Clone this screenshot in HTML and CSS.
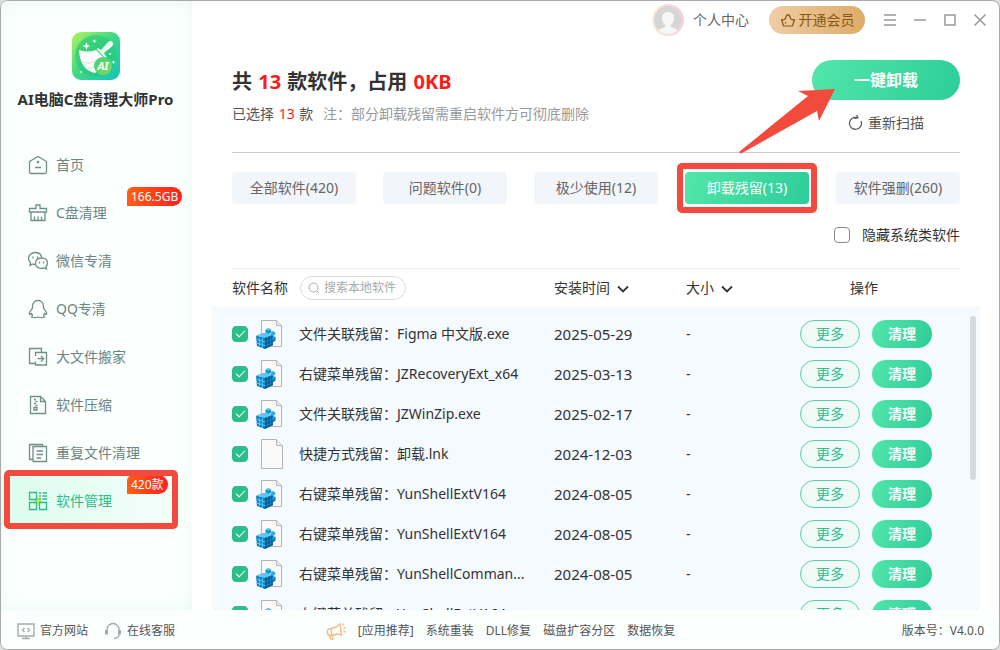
FILE: index.html
```html
<!DOCTYPE html>
<html lang="zh-CN">
<head>
  <meta charset="UTF-8" />
  <meta name="viewport" content="width=device-width, initial-scale=1.0" />
  <title>AI电脑C盘清理大师Pro</title>
  <link rel="stylesheet" href="styles.css">
</head>
<body>
  <!-- 公用图标 -->
  <svg class="sprite" aria-hidden="true">
    <symbol id="icon-page" viewBox="0 0 28 32">
      <path d="M5.500 1.500h15l6 6v23h-21z" fill="#f9f9f9" stroke="#b4b4b4"/>
      <path d="M20.500 1.500v6h6" fill="#ececec" stroke="#b4b4b4"/>
    </symbol>
    <symbol id="icon-reg" viewBox="0 0 28 32">
      <path d="M5.500 2.500h15l5 5v21h-20z" fill="#f9f9f9" stroke="#b4b4b4"/>
      <path d="M20.500 2.500v5h5" fill="#ececec" stroke="#b4b4b4"/>
      <path d="M0 18l8-3 9 2v10l-8 4-8-3z" fill="#0b7fc4"/>
      <path d="M0 18l8-3 9 2-8 3z" fill="#5cc9f5"/>
      <path d="M9 20l8-3v10l-8 4z" fill="#07558c"/>
      <path d="M3.500 20v8M6.500 20v9.500M1 21.500l8 2.500M1 25l8 2.500" stroke="#54c5f2" stroke-width="1.100"/>
      <path d="M11.700 19v11M14.500 18v10M9 24l8-3M9 28l8-3.500" stroke="#1c8fd0" stroke-width=".7"/>
      <path d="M9.500 11.500l3-1.500 2.500 1.500v3L12.300 16 9.500 14.500z" fill="#1090d4"/>
      <path d="M9.500 11.500l3-1.500 2.500 1.500-2.700 1.300z" fill="#62ccf6"/>
      <path d="M14.500 20l2.500-1.500 2.500 1.500v2.500L17.200 24l-2.700-1.500z" fill="#0a70b0"/>
      <circle cx="17" cy="15.500" r="2.200" fill="#2aa8e4"/>
      <circle cx="18" cy="20" r="1.800" fill="#1d9cdc"/>
    </symbol>
  </svg>

  <div class="window">
    <div class="content">
      <aside class="sidebar">
        <svg class="logo" viewBox="0 0 48 48">
          <defs>
            <linearGradient id="logoBg" x1="0" y1="0" x2="1" y2="1">
              <stop offset="0" stop-color="#b2f55c"/>
              <stop offset=".45" stop-color="#43d982"/>
              <stop offset="1" stop-color="#12c3bd"/>
            </linearGradient>
            <linearGradient id="logoBall" x1="0" y1="0" x2="1" y2="1">
              <stop offset="0" stop-color="#3fcf77"/>
              <stop offset="1" stop-color="#7fdc63"/>
            </linearGradient>
          </defs>
          <rect width="48" height="48" rx="9" fill="url(#logoBg)"/>
          <circle cx="24" cy="24" r="21" fill="#27c77b" opacity=".65"/>
          <path d="M29 18l7-8q3-2 4.500 0 1.500 2 0 4L32 21l2.500 4-1.500 1-8.500-9 1.500-1z" fill="#e8fff2"/>
          <path d="M7 18q9 3 17 0l9 9q-4 10-10 14Q8 38 7 18z" fill="#fff"/>
          <path d="M10 30q8 3 14-2M14 36q8 1 13-5" fill="none" stroke="#bdeed2" stroke-width="1"/>
          <path d="M14.500 10l1 3 3 1-3 1-1 3-1-3-3-1 3-1zM22.500 7l.6 1.500 1.500.6-1.500.6-.6 1.500-.6-1.500-1.500-.6 1.500-.6zM41.500 28l.6 1.500 1.500.6-1.500.6-.6 1.500-.6-1.500-1.500-.6 1.500-.6z" fill="#fff"/>
          <circle cx="9" cy="40" r="1" fill="#d9ffe8"/>
          <circle cx="38" cy="22" r="1" fill="#d9ffe8"/>
          <circle cx="31" cy="34" r="9" fill="url(#logoBall)"/>
          <text class="logo-text" x="31" y="38" text-anchor="middle">AI</text>
        </svg>
        <h1 class="app-name">AI电脑C盘清理大师Pro</h1>

        <nav class="nav">
          <a class="nav-item" href="#">
            <svg class="nav-icon" viewBox="0 0 20 20"><path d="M1.500 6.500L10 1.500l8.500 5V17q0 1.500-1.500 1.500H3q-1.500 0-1.500-1.500zM7 12.500h6"/><circle cx="10" cy="7" r=".6"/></svg>
            首页
          </a>
          <a class="nav-item" href="#">
            <svg class="nav-icon" viewBox="0 0 20 20"><path d="M1.500 9V5.500H8V2h4v3.500h6.500V9zM3 9v8.500h14V9M6.500 17v-3.500M10 17v-3.500M13.500 17v-3.500"/></svg>
            C盘清理
            <span class="badge">166.5GB</span>
          </a>
          <a class="nav-item" href="#">
            <svg class="nav-icon" viewBox="0 0 20 20"><path d="M7.500 13.500q-2 0-3-.5L2 14.500l.5-3Q.5 9.500.5 7.500c0-3.500 3-6 6.700-6 3.500 0 6 2 6.500 5"/><path d="M13.500 7c3.500 0 6 2 6 5 0 1.500-.6 2.500-1.500 3.500l.5 2.500-2.500-1q-5 1-7.500-1.500c-2.500-4 0-8.500 5-8.500z"/><path d="M5 5.500v2M9.500 5.500v2M11.500 10.500v2M15.500 10.500v2"/></svg>
            微信专清
          </a>
          <a class="nav-item" href="#">
            <svg class="nav-icon" viewBox="0 0 20 20"><path d="M10 1.500C6.500 1.500 4.500 4 4.500 7v2L1.500 13.500q-.3 2 .5 2l1.500-1 1 2-1 1.500q3 1.300 6.500 0 3.500 1.300 6.500 0l-1-1.500 1-2 1.500 1q.8 0 .5-2L15.500 9V7c0-3-2-5.500-5.500-5.500z"/></svg>
            QQ专清
          </a>
          <a class="nav-item" href="#">
            <svg class="nav-icon" viewBox="0 0 20 20"><path d="M7 16.500H1.500v-15h12v4M7.500 9V5.500h11v12.500H7.500v-3.500M9.500 11.700h6M13 9l2.700 2.700L13 14.500"/></svg>
            大文件搬家
          </a>
          <a class="nav-item" href="#">
            <svg class="nav-icon" viewBox="0 0 20 20"><path d="M2.500 1.500h10l5 5v12h-15zM12.500 1.500v5h5"/><path d="M6 4.500h2M7.500 6.500h2M6 8.500h2M7.500 10.500h2M6 12.500h3v2.500H6z"/></svg>
            软件压缩
          </a>
          <a class="nav-item" href="#">
            <svg class="nav-icon" viewBox="0 0 20 20"><path d="M5 3.500h13.500v15H5zM5 16.500H1.500v-15h13v2M8.500 8h6.500M8.500 11.500h6.500M8.500 15h4.500"/></svg>
            重复文件清理
          </a>
          <a class="nav-item active" href="#">
            <svg class="nav-icon" viewBox="0 0 20 20"><path class="spark" d="M10 5l1.500 3.500 3.500 1.500-3.500 1.500L10 15l-1.500-3.500L5 10l3.500-1.500z"/><path d="M1.500 1.500h7v7h-7zM1.500 11.500h7v7h-7zM11.500 11.500h7v7h-7zM11 2h2M14.500 2h4.500M11 5h2M14.500 5h4.500M11 8h2M14.500 8h4.500"/></svg>
            软件管理
            <span class="badge">420款</span>
            <span class="mark mark-nav"></span>
          </a>
        </nav>
      </aside>

      <main class="main">
        <header class="topbar">
          <svg class="avatar" viewBox="0 0 32 32">
            <defs>
              <linearGradient id="ring"><stop offset="0" stop-color="#fbe6cc"/><stop offset="1" stop-color="#f9c4d6"/></linearGradient>
              <clipPath id="face"><circle cx="16" cy="16" r="14"/></clipPath>
            </defs>
            <circle cx="16" cy="16" r="15" fill="#fff" stroke="url(#ring)" stroke-width="1.500"/>
            <circle cx="16" cy="16" r="14" fill="#d6d6d6"/>
            <path clip-path="url(#face)" d="M16 8c-4 0-6 2.500-6 6 0 3 1 5 3 6.500V23q-5 1.500-8 4v4h22v-4q-3-2.500-8-4v-2.500c2-1.500 3-3.500 3-6.500 0-3.500-2-6-6-6z" fill="#f7f7f7"/>
          </svg>
          <a class="user-link" href="#">个人中心</a>
          <button class="vip-btn" type="button">
            <svg class="vip-icon" viewBox="0 0 16 16"><path d="M3.500 14L1.500 7.500q2 .8 3.500-.5 1-1.500 1.500-3.500 1.500-1.500 3 0 .5 2 1.500 3.500 1.500 1.300 3.500.5L12.500 14zM5.500 10v1.500"/></svg>
            开通会员
          </button>
          <button class="win-btn" type="button" aria-label="菜单"><svg viewBox="0 0 14 14"><path d="M1 2h12M1 7h12M1 12h12"/></svg></button>
          <button class="win-btn" type="button" aria-label="最小化"><svg viewBox="0 0 14 14"><path d="M1 7h12"/></svg></button>
          <button class="win-btn" type="button" aria-label="最大化"><svg viewBox="0 0 14 14"><path d="M2 2h10v10H2z"/></svg></button>
          <button class="win-btn" type="button" aria-label="关闭"><svg viewBox="0 0 14 14"><path d="M1.500 1.500l11 11M12.500 1.500l-11 11"/></svg></button>
        </header>

        <section class="summary">
          <div class="summary-text">
            <h2>共 <em>13</em> 款软件，占用 <em>0KB</em></h2>
            <p>已选择 <em>13</em> 款 <span class="note">注：部分卸载残留需重启软件方可彻底删除</span></p>
          </div>
          <div class="summary-actions">
            <button class="main-btn" type="button">一键卸载</button>
            <button class="rescan" type="button">
              <svg class="rescan-icon" viewBox="0 0 16 16"><path d="M9.500 2.700A6 6 0 1 0 13 6M6.500 3.500l3.500-.7L8.500 0"/></svg>
              重新扫描
            </button>
            <svg class="arrow" viewBox="0 0 98 66"><path d="M97 1L60 3l10 5L1 64q0 1.500 3 1L79 23l2 10z"/></svg>
          </div>
        </section>

        <div class="tabs">
          <button class="tab" type="button">全部软件(420)</button>
          <button class="tab" type="button">问题软件(0)</button>
          <button class="tab" type="button">极少使用(12)</button>
          <button class="tab active" type="button">卸载残留(13)<span class="mark mark-tab"></span></button>
          <button class="tab" type="button">软件强删(260)</button>
        </div>

        <div class="filter">
          <input class="check" type="checkbox" id="hideSystem">
          <label for="hideSystem">隐藏系统类软件</label>
        </div>

        <div class="list">
          <table>
            <thead>
              <tr>
                <th class="col-name">
                  <div class="name-head">
                    <label for="search">软件名称</label>
                    <span class="search">
                      <svg class="search-icon" viewBox="0 0 12 12"><circle cx="5.500" cy="5.500" r="4.500"/><path d="M9 9l2 2"/></svg>
                      <input type="text" id="search" placeholder="搜索本地软件">
                    </span>
                  </div>
                </th>
                <th class="col-date">安装时间<svg class="sort" viewBox="0 0 12 8"><path d="M1 1.500l5 5 5-5"/></svg></th>
                <th class="col-size">大小<svg class="sort" viewBox="0 0 12 8"><path d="M1 1.500l5 5 5-5"/></svg></th>
                <th class="col-ops">操作</th>
              </tr>
            </thead>
            <tbody>
              <tr>
                <td><div class="name"><input class="check" type="checkbox" id="r1" checked><svg class="file"><use href="#icon-reg"/></svg><label for="r1">文件关联残留：Figma 中文版.exe</label></div></td>
                <td class="date">2025-05-29</td>
                <td>-</td>
                <td><div class="ops"><button class="more" type="button">更多</button><button class="clean" type="button">清理</button></div></td>
              </tr>
              <tr>
                <td><div class="name"><input class="check" type="checkbox" id="r2" checked><svg class="file"><use href="#icon-reg"/></svg><label for="r2">右键菜单残留：JZRecoveryExt_x64</label></div></td>
                <td class="date">2025-03-13</td>
                <td>-</td>
                <td><div class="ops"><button class="more" type="button">更多</button><button class="clean" type="button">清理</button></div></td>
              </tr>
              <tr>
                <td><div class="name"><input class="check" type="checkbox" id="r3" checked><svg class="file"><use href="#icon-reg"/></svg><label for="r3">文件关联残留：JZWinZip.exe</label></div></td>
                <td class="date">2025-02-17</td>
                <td>-</td>
                <td><div class="ops"><button class="more" type="button">更多</button><button class="clean" type="button">清理</button></div></td>
              </tr>
              <tr>
                <td><div class="name"><input class="check" type="checkbox" id="r4" checked><svg class="file"><use href="#icon-page"/></svg><label for="r4">快捷方式残留：卸载.lnk</label></div></td>
                <td class="date">2024-12-03</td>
                <td>-</td>
                <td><div class="ops"><button class="more" type="button">更多</button><button class="clean" type="button">清理</button></div></td>
              </tr>
              <tr>
                <td><div class="name"><input class="check" type="checkbox" id="r5" checked><svg class="file"><use href="#icon-reg"/></svg><label for="r5">右键菜单残留：YunShellExtV164</label></div></td>
                <td class="date">2024-08-05</td>
                <td>-</td>
                <td><div class="ops"><button class="more" type="button">更多</button><button class="clean" type="button">清理</button></div></td>
              </tr>
              <tr>
                <td><div class="name"><input class="check" type="checkbox" id="r6" checked><svg class="file"><use href="#icon-reg"/></svg><label for="r6">右键菜单残留：YunShellExtV164</label></div></td>
                <td class="date">2024-08-05</td>
                <td>-</td>
                <td><div class="ops"><button class="more" type="button">更多</button><button class="clean" type="button">清理</button></div></td>
              </tr>
              <tr>
                <td><div class="name"><input class="check" type="checkbox" id="r7" checked><svg class="file"><use href="#icon-reg"/></svg><label for="r7">右键菜单残留：YunShellComman...</label></div></td>
                <td class="date">2024-08-05</td>
                <td>-</td>
                <td><div class="ops"><button class="more" type="button">更多</button><button class="clean" type="button">清理</button></div></td>
              </tr>
              <tr>
                <td><div class="name"><input class="check" type="checkbox" id="r8" checked><svg class="file"><use href="#icon-reg"/></svg><label for="r8">右键菜单残留：YunShellExtV164</label></div></td>
                <td class="date">2024-08-05</td>
                <td>-</td>
                <td><div class="ops"><button class="more" type="button">更多</button><button class="clean" type="button">清理</button></div></td>
              </tr>
            </tbody>
          </table>
          <div class="scroll-thumb"></div>
        </div>
      </main>
    </div>

    <footer class="footer">
      <div class="foot-left">
        <a href="#"><svg class="foot-icon" viewBox="0 0 18 18"><path d="M1 2h16v12H1zM5 16.500h8M9 14v2M7.500 6L5.500 8l2 2M10.500 6l2 2-2 2"/></svg>官方网站</a>
        <a href="#"><svg class="foot-icon" viewBox="0 0 18 18"><path d="M3 9V7.500a6 6 0 0 1 12 0V9M15 12q0 4-5 4.500"/><path class="thick" d="M2.500 8v4.500M15.500 8v4.500"/></svg>在线客服</a>
      </div>
      <div class="foot-center">
        <svg class="horn" viewBox="0 0 20 18"><path d="M5 6.500l5-1.500 4-3 1.500 11-4.500-1-5 1.500zM5 6.500q-4 .5-4 4 1 3.500 5 3M3.500 13.500l1 3.500h2.500l-1-3.500M16.500 3.500l1-2M17.500 6.500l2-1M17.500 9.500l2 .5"/></svg>
        <a href="#">[应用推荐]</a>
        <a href="#">系统重装</a>
        <a href="#">DLL修复</a>
        <a href="#">磁盘扩容分区</a>
        <a href="#">数据恢复</a>
      </div>
      <span class="version">版本号：V4.0.0</span>
    </footer>
  </div>
</body>
</html>
```
FILE: styles.css
```css
* {
  box-sizing: border-box;
}

body {
  margin: 0;
  background: #dcdcdc;
  font-family: "Noto Sans", "Noto Sans CJK SC", sans-serif;
  font-size: 14px;
  line-height: 20px;
  color: #333;
}

a {
  color: inherit;
  text-decoration: none;
}

button, input {
  font-family: inherit;
  font-size: inherit;
  line-height: inherit;
  margin: 0;
}

button {
  padding: 0;
  border: none;
  background: none;
  color: inherit;
  cursor: pointer;
}

em {
  margin: 0 1px;
  font-style: normal;
  color: #fb1d1d;
}

.sprite {
  display: none;
}

.window {
  display: flex;
  flex-direction: column;
  height: 100vh;
  border: 1px solid #a9a9a9;
  border-radius: 8px;
  background: #fff;
  overflow: hidden;
}

.content {
  display: flex;
  flex: 1;
  min-height: 0;
}

/* 左侧菜单 */
.sidebar {
  width: 191px;
  flex-shrink: 0;
  padding-top: 31px;
  background: #fbfffe;
  box-shadow: inset 0 0 18px #e9f9f3;
}

.logo {
  display: block;
  width: 48px;
  height: 48px;
  margin: 0 0 9px 71px;
}

.logo-text {
  font-size: 11px;
  font-weight: bold;
  font-style: italic;
  fill: #fff;
}

.app-name {
  margin: 0 2px 32px 0;
  font-size: 15px;
  line-height: 20px;
  text-align: center;
  white-space: nowrap;
  color: #333;
}

.nav-item {
  position: relative;
  display: flex;
  align-items: center;
  gap: 8px;
  height: 48px;
  padding-left: 27px;
  color: #6b8580;
}

.nav-icon {
  width: 20px;
  height: 20px;
  fill: none;
  stroke: #6f8f89;
  stroke-width: 1.3;
}

.nav-item.active {
  background: linear-gradient(90deg, #dcfcef, #f6fffb);
  color: #2bbd8b;
}

.nav-item.active .nav-icon {
  stroke: #2bbd8b;
}

.nav-item .spark {
  fill: #c5ea4c;
  stroke: none;
}

.badge {
  position: absolute;
  left: 126px;
  top: -2px;
  padding: 0 4px;
  border-radius: 6px 10px 10px 0;
  background: linear-gradient(90deg, #ff5f14, #ff1f1f);
  color: #fff;
  font-size: 12px;
  line-height: 19px;
}

/* 红色标注框 */
.mark {
  position: absolute;
  border: 6px solid #f24a3d;
  border-radius: 5px;
  pointer-events: none;
}

.mark-nav {
  left: 3px;
  right: 14px;
  top: -7px;
  bottom: -4px;
}

.mark-tab {
  inset: -9px -8px;
}

/* 右侧主区域 */
.main {
  display: flex;
  flex-direction: column;
  flex: 1;
  min-width: 0;
  padding: 0 19px 0 20px;
}

.topbar {
  display: flex;
  align-items: center;
  justify-content: flex-end;
  gap: 16px;
  height: 38px;
  margin-right: -7px;
  color: #666;
}

.avatar {
  width: 32px;
  height: 32px;
  margin-right: -7px;
}

.vip-btn {
  display: flex;
  align-items: center;
  justify-content: center;
  gap: 3px;
  width: 96px;
  height: 28px;
  margin: 0 2px 0 4px;
  border-radius: 14px;
  background: linear-gradient(90deg, #efcda4, #deab68);
  color: #865719;
}

.vip-icon {
  width: 16px;
  height: 16px;
  fill: none;
  stroke: #865719;
  stroke-width: 1.2;
  stroke-linejoin: round;
}

.win-btn {
  width: 14px;
  height: 14px;
}

.win-btn svg {
  display: block;
  fill: none;
  stroke: #999;
  stroke-width: 1.5;
}

.summary {
  display: flex;
  justify-content: space-between;
  margin: 0 20px;
  padding-top: 21px;
  height: 114px;
  border-bottom: 1px solid #ccc;
}

.summary h2 {
  margin: 8px 0;
  font-size: 20px;
  line-height: 28px;
}

.summary p {
  margin: 0;
  color: #555;
}

.note {
  margin-left: 6px;
  color: #999;
}

.summary-actions {
  position: relative;
  display: flex;
  flex-direction: column;
  align-items: center;
  gap: 13px;
}

.main-btn {
  width: 148px;
  height: 40px;
  border-radius: 20px;
  background: linear-gradient(110deg, #52e6aa, #2dcd99);
  color: #fff;
  font-size: 16px;
  font-weight: bold;
}

.rescan {
  display: flex;
  align-items: center;
  gap: 4px;
  color: #555;
}

.rescan-icon {
  width: 16px;
  height: 16px;
  fill: none;
  stroke: #555;
  stroke-width: 1.2;
}

.arrow {
  position: absolute;
  left: -74px;
  top: 28px;
  width: 98px;
  height: 66px;
  fill: #f24a3d;
}

.tabs {
  display: flex;
  justify-content: space-between;
  margin: 19px 20px 21px;
}

.tab {
  position: relative;
  width: 124px;
  height: 32px;
  border-radius: 4px;
  background: #f2f5fa;
  color: #666;
}

.tab.active {
  background: linear-gradient(110deg, #52e6aa, #2dcd99);
  color: #fff;
}

.filter {
  display: flex;
  align-items: center;
  justify-content: flex-end;
  gap: 12px;
  margin: 0 20px;
  padding-bottom: 23px;
  border-bottom: 1px solid #ebebeb;
}

.check {
  appearance: none;
  display: grid;
  place-items: center;
  flex-shrink: 0;
  width: 16px;
  height: 16px;
  border: 1px solid #888;
  border-radius: 4px;
  background: #fff;
}

.check:checked {
  border-color: #2bbd8b;
  background: #2bbd8b;
}

.check:checked::before {
  content: "";
  width: 8px;
  height: 4px;
  margin-bottom: 3px;
  border-left: 1px solid #fff;
  border-bottom: 1px solid #fff;
  transform: rotate(-45deg);
}

/* 软件列表 */
.list {
  position: relative;
  flex: 1;
  min-height: 0;
  overflow: hidden;
}

table {
  width: 100%;
  table-layout: fixed;
  border-collapse: collapse;
}

th, td {
  padding: 0;
  text-align: left;
  font-weight: normal;
  white-space: nowrap;
}

th {
  height: 37px;
}

.col-date {
  width: 132px;
}

.col-size {
  width: 114px;
}

.col-ops {
  width: 180px;
  padding-left: 50px;
}

.name-head {
  display: flex;
  align-items: center;
  gap: 12px;
  padding-left: 20px;
}

.search {
  display: flex;
  align-items: center;
  gap: 4px;
  width: 106px;
  height: 24px;
  padding: 0 7px;
  border: 1px solid #d9dbe4;
  border-radius: 12px;
}

.search-icon {
  flex-shrink: 0;
  width: 12px;
  height: 12px;
  fill: none;
  stroke: #aaa;
}

.search input {
  width: 100%;
  min-width: 0;
  padding: 1px 0 0;
  border: none;
  outline: none;
  background: none;
  font-size: 12px;
}

.search input::placeholder {
  color: #aaa;
}

.sort {
  width: 12px;
  height: 8px;
  margin-left: 7px;
  fill: none;
  stroke: #333;
  stroke-width: 1.8;
}

tbody {
  background: #f5faff;
}

td {
  height: 40px;
}

tbody tr:first-child td {
  height: 48px;
  padding-top: 8px;
}

.date {
  font-size: 15px;
}

.name {
  display: flex;
  align-items: center;
  padding-left: 20px;
}

.file {
  width: 28px;
  height: 32px;
  margin: 0 15px 0 8px;
}

.ops {
  display: flex;
  gap: 12px;
}

.more, .clean {
  width: 60px;
  height: 28px;
  border-radius: 14px;
}

.more {
  border: 1px solid #58cfa6;
  background: #f0fbf7;
  color: #2bbd8b;
}

.clean {
  background: linear-gradient(110deg, #52e6aa, #2dcd99);
  color: #fff;
  font-weight: bold;
}

.scroll-thumb {
  position: absolute;
  right: 4px;
  top: 47px;
  width: 6px;
  height: 164px;
  border-radius: 3px;
  background: #d6d9de;
}

/* 底部栏 */
.footer {
  position: relative;
  display: flex;
  align-items: center;
  height: 39px;
  padding: 2px 15px 0 16px;
  background: #fbfffe;
  font-size: 12px;
  color: #555;
}

.foot-left, .foot-center {
  display: flex;
  align-items: center;
}

.foot-left {
  flex: 1;
  gap: 16px;
}

.foot-left a {
  display: flex;
  align-items: center;
  gap: 5px;
}

.foot-icon {
  width: 18px;
  height: 18px;
  fill: none;
  stroke: #aaa;
  stroke-width: 1.4;
}

.foot-icon .thick {
  stroke-width: 3;
}

.foot-center {
  gap: 12px;
}

.horn {
  width: 20px;
  height: 18px;
  fill: none;
  stroke: #eebf85;
  stroke-width: 1.4;
}

.version {
  flex: 1;
  text-align: right;
}
```
